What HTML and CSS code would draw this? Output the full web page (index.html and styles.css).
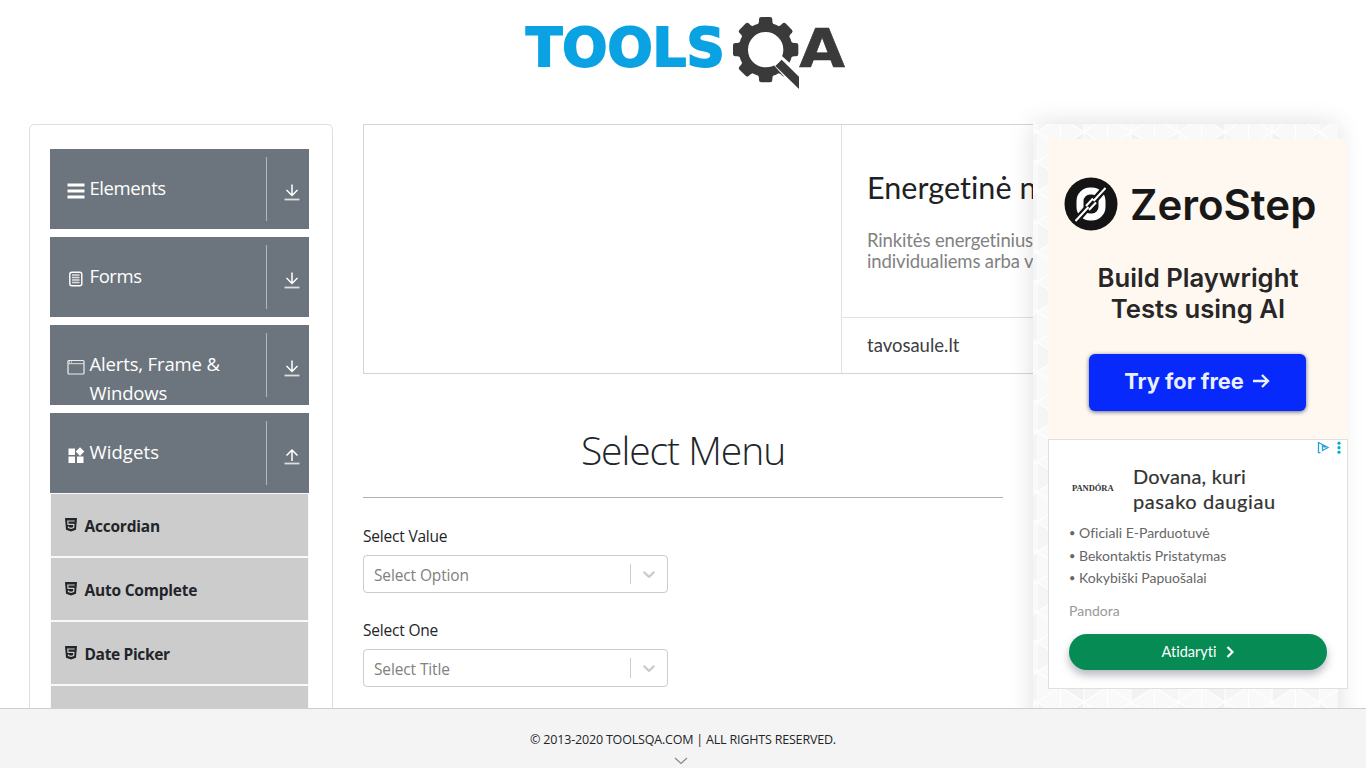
FILE: index.html
```html
<!DOCTYPE html>
<html lang="en">
<head>
<meta charset="utf-8">
<title>ToolsQA - Select Menu</title>
<link rel="stylesheet" href="styles.css">
</head>
<body>
<svg class="defs" width="0" height="0">
  <symbol id="down" viewBox="0 0 16 17"><path d="M8 .5v11M2.500 6 8 11.500l5.500-5.500" fill="none" stroke="#fff" stroke-width="1.500"/><path d="M.5 15.500h15" stroke="#ddd" stroke-width="1.800"/></symbol>
  <symbol id="up" viewBox="0 0 16 17"><path d="M8 13V2M2.500 7.500 8 2l5.500 5.500" fill="none" stroke="#fff" stroke-width="1.500"/><path d="M.5 15.500h15" stroke="#ddd" stroke-width="1.800"/></symbol>
  <symbol id="html5" viewBox="0 0 12 14"><path d="M0 0h12l-1 11.700L6 13.500l-5-1.800z" fill="#212529"/><path d="M9.700 3H2.800l.25 3.300H8.900l-.3 3.200L6 10.400l-2.500-.9-.1-1" fill="none" stroke="#ccc" stroke-width="1.200"/></symbol>
  <symbol id="chev" viewBox="0 0 20 20"><path d="M4.516 7.548c.436-.446 1.043-.481 1.576 0L10 11.295l3.908-3.747c.533-.481 1.141-.446 1.574 0 .436.445.408 1.197 0 1.615-.406.418-4.695 4.502-4.695 4.502a1.095 1.095 0 0 1-1.576 0S4.924 9.581 4.516 9.163s-.436-1.170 0-1.615z" fill="#ccc"/></symbol>
</svg>
<header class="header">
  <svg class="logo" viewBox="0 0 1020 285">
    <text class="logo-text" x="33" y="183" textLength="596" lengthAdjust="spacingAndGlyphs" fill="#0aa2e2" stroke="#0aa2e2" stroke-width="6">TOOLS</text>
    <g transform="translate(752 134)" fill="#3a3a3b">
      <g id="teeth">
        <path id="tooth" d="M-25-70-20-84V-91q0-7 7-7H13q7 0 7 7v7l5 14z"/>
        <use href="#tooth" transform="rotate(45)"/><use href="#tooth" transform="rotate(90)"/>
        <use href="#tooth" transform="rotate(135)"/><use href="#tooth" transform="rotate(180)"/>
        <use href="#tooth" transform="rotate(225)"/><use href="#tooth" transform="rotate(270)"/>
        <use href="#tooth" transform="rotate(315)"/>
      </g>
      <circle r="67" fill="none" stroke="#3a3a3b" stroke-width="28"/>
      <path d="M22 44 48 18l75 68v46h-22z" fill="#fff"/>
      <path d="M29 49 48 30l52 51v37z"/>
    </g>
    <text class="logo-text" x="853" y="185" textLength="137" lengthAdjust="spacingAndGlyphs" fill="#3a3a3b" stroke="#3a3a3b" stroke-width="2">A</text>
  </svg>
</header>
<main class="main">
  <nav class="sidebar">
    <div class="group"><svg class="gicon" viewBox="0 0 18 18"><path d="M.5 3h17M.5 9h17M.5 15h17" stroke="#fff" stroke-width="2.800"/></svg><span class="gname">Elements</span><span class="toggle"><svg><use href="#down"/></svg></span></div>
    <div class="group"><svg class="gicon" viewBox="0 0 18 18"><rect x="2.800" y="2.300" width="12" height="13.500" rx="2" fill="none" stroke="#fff" stroke-width="1.400"/><path d="M5 5h7.500M5 7.500h7.500M5 10h7.500M5 12.500h7.500" stroke="#ddd" stroke-width="1.300"/></svg><span class="gname">Forms</span><span class="toggle"><svg><use href="#down"/></svg></span></div>
    <div class="group"><svg class="gicon" viewBox="0 0 18 18"><rect x="1" y="2.500" width="16" height="13.500" rx="1" fill="none" stroke="#eee" stroke-width="1.200"/><path d="M1 5.700h16" stroke="#ddd"/><path d="M2 4h4" stroke="#fff" stroke-dasharray="1 1"/></svg><span class="gname wide">Alerts, Frame &amp; Windows</span><span class="toggle"><svg><use href="#down"/></svg></span></div>
    <div class="group open"><svg class="gicon" viewBox="0 0 18 18" fill="#fff"><path d="M1.500 2.500H8V9H1.500zM1.500 10.500H8V17H1.500zM10 10.500h6.500V17H10zM13 1.300l4.300 4.300-4.300 4.300-4.300-4.300z"/></svg><span class="gname wider">Widgets</span><span class="toggle"><svg><use href="#up"/></svg></span></div>
    <ul class="items">
      <li><svg><use href="#html5"/></svg><span>Accordian</span></li>
      <li><svg><use href="#html5"/></svg><span>Auto Complete</span></li>
      <li><svg><use href="#html5"/></svg><span class="tight">Date Picker</span></li>
      <li></li>
    </ul>
  </nav>
  <section class="content">
    <div class="banner">
      <div class="banner-image"></div>
      <div class="banner-copy">
        <div class="banner-body">
          <div class="banner-title">Energetinė n</div>
          <div class="banner-text">Rinkitės energetinius<br>individualiems arba v</div>
        </div>
        <div class="banner-site">tavosaule.lt</div>
      </div>
    </div>
    <h1>Select Menu</h1>
    <div class="label">Select Value</div>
    <div class="select"><span>Select Option</span><svg><use href="#chev"/></svg></div>
    <div class="label">Select One</div>
    <div class="select"><span>Select Title</span><svg><use href="#chev"/></svg></div>
  </section>
  <aside class="ads">
    <svg class="pattern">
      <defs><pattern id="tri" width="141" height="60" patternUnits="userSpaceOnUse" x="4" y="8">
        <rect width="141" height="60" fill="#f9f9f9"/>
        <path d="M47 0v30L23.500 15zM47 60V30L23.500 45zM94 0v30l23.500-15z" fill="#f2f2f2"/>
        <path d="M47 0 70.500 15 47 30zM0 30l23.500 15L0 60zM117.500 15 141 0v30z" fill="#f5f5f5"/>
        <path d="M0 0v60M23.500 0v60M47 0v60M70.500 0v60M94 0v60M117.500 0v60M0 0l94 60M94 0 0 60M47 0l94 60M141 0 47 60M0 30 47 0M0 30l47 30M94 0l47 30-47 30" fill="none" stroke="#fff" stroke-width="1.200"/>
      </pattern></defs>
      <rect width="100%" height="100%" fill="url(#tri)"/>
    </svg>
    <div class="zero">
      <div class="zero-brand">
        <svg viewBox="0 0 54 54"><circle cx="27" cy="27" r="26.500" fill="#141414"/><rect x="16" y="14" width="22" height="26" rx="10" fill="none" stroke="#fff" stroke-width="7"/><path d="M10 46 44 8" stroke="#141414" stroke-width="6.500"/><path d="M11.500 44 24.500 30M29.500 24 41.500 11M22 29l7-7.500M25 33l7-7.500" stroke="#fff" stroke-width="2"/></svg>
        <span>ZeroStep</span>
      </div>
      <div class="zero-line z1">Build Playwright</div>
      <div class="zero-line">Tests using AI</div>
      <div class="zero-button"><span>Try for free</span><svg viewBox="0 0 18 16"><path d="M1 8h15M10 2l6 6-6 6" fill="none" stroke="#e9efff" stroke-width="2.400"/></svg></div>
    </div>
    <div class="pandora">
      <svg class="adchoice" viewBox="0 0 26 14"><path d="M3.500 11.700H1.500V1.500L11 6.500 5.500 9.500V5l3 1.500" fill="none" stroke="#2a9fd8" stroke-width="1.300"/><g fill="#00aecd"><circle cx="22" cy="2.200" r="1.600"/><circle cx="22" cy="6.700" r="1.600"/><circle cx="22" cy="11.200" r="1.600"/></g></svg>
      <div class="pan-head"><span class="pan-logo">PANDÓRA</span><div class="pan-title"><span class="p1">Dovana, kuri</span><br><span class="p2">pasako daugiau</span></div></div>
      <ul class="pan-list"><li>Oficiali E-Parduotuvė</li><li>Bekontaktis Pristatymas</li><li>Kokybiški Papuošalai</li></ul>
      <div class="pan-name">Pandora</div>
      <div class="pan-button"><span>Atidaryti</span><svg viewBox="0 0 8 12"><path d="M1.500 1 6.500 6l-5 5" fill="none" stroke="#fff" stroke-width="2.200"/></svg></div>
    </div>
  </aside>
</main>
<footer class="footer"><span>© 2013-2020 TOOLSQA.COM | ALL RIGHTS RESERVED.</span><svg viewBox="0 0 14 8"><path d="M1 1l6 5.500L13 1" fill="none" stroke="#888" stroke-width="1.200"/></svg></footer>
</body>
</html>
```
FILE: styles.css
```css
* { box-sizing: border-box; }
body { margin: 0; height: 768px; overflow: hidden; display: flex; flex-direction: column; background: #fff; color: #212529; font-family: "Open Sans", "Noto Sans", sans-serif; font-variant-ligatures: none; }
ul { list-style: none; margin: 0; padding: 0; }
svg { display: block; flex: none; }
.defs { position: absolute; }
.header { height: 124px; flex: none; padding: 5px 0 0 515px; }
.logo { width: 340px; height: 95px; }
.logo-text { font: bold 162px "DejaVu Sans", sans-serif; }
.main { flex: 1; min-height: 0; display: flex; gap: 30px; padding-left: 29px; }

.sidebar { width: 304px; height: 700px; flex: none; border: 1px solid #dfdfdf; border-radius: 5px; padding: 24px 23px 0 20px; }
.group { height: 80px; margin-bottom: 8px; padding: 8px 9px 8px 17px; background: #6c757d; color: #fff; display: flex; overflow: hidden; }
.group.open { margin-bottom: 0; }
.gicon { width: 18px; height: 18px; margin: 25px 4.500px 0 0; }
.gname { flex: 1; font-size: 18.500px; line-height: 29px; padding-top: 16px; letter-spacing: -.42px; }
.gname.wide { letter-spacing: -.15px; }
.gname.wider { letter-spacing: .1px; }
.toggle { width: 43px; height: 64px; margin-right: -9px; border-left: 1px solid #b3b7bb; padding: 27px 0 0 17px; }
.toggle svg { width: 16px; height: 17px; }
.items li { height: 64px; border: 1px solid #f8f9fa; background: #ccc; display: flex; align-items: flex-start; padding: 24px 0 0 14px; font-size: 15.500px; font-weight: 700; line-height: 17px; }
.items svg { width: 12px; height: 14px; margin-right: 7.500px; }
.items span { letter-spacing: -.22px; }
.items .tight { letter-spacing: -.35px; }

.content { width: 640px; flex: none; }
.banner { width: 670px; height: 250px; border: 1px solid #d4d4d4; border-right: 0; display: flex; overflow: hidden; }
.banner-image { width: 478px; flex: none; border-right: 1px solid #e2e2e2; }
.banner-copy { flex: 1; font-family: Lato, sans-serif; white-space: nowrap; }
.banner-body { height: 193px; border-bottom: 1px solid #e2e2e2; padding: 42px 0 0 25px; }
.banner-title { font-size: 30.500px; line-height: 40px; color: #202124; letter-spacing: .05px; }
.banner-text { font-size: 18.500px; line-height: 21px; color: #828282; margin-top: 23px; letter-spacing: -.14px; }
.banner-site { padding: 16px 25px; font-size: 18.500px; line-height: 22px; color: #3c4043; }
h1 { margin: 47px 0 0; height: 77px; border-bottom: 1px solid #b0b0b0; text-align: center; font-size: 39px; line-height: 58px; font-weight: 300; letter-spacing: -1.050px; }
.label { font-size: 15.500px; line-height: 24px; height: 31px; margin-top: 26px; letter-spacing: -.2px; }
.select { width: 305px; height: 38px; border: 1px solid #ccc; border-radius: 4px; color: #808080; display: flex; align-items: center; padding-left: 10px; font-size: 15.500px; letter-spacing: -.13px; }
.select + .label { margin-top: 25px; }
.select span { flex: 1; padding-top: 2px; }
.select svg { width: 37px; height: 20px; padding: 0 8px; border-left: 1px solid #ccc; }

.ads { position: relative; width: 305px; height: 700px; flex: none; padding: 15px; box-shadow: 0 0 24px rgba(0,0,0,.13); background: #f8f8f8; }
.pattern { position: absolute; inset: 0; width: 305px; height: 700px; }
.zero { position: relative; width: 300px; height: 300px; background: #fef8f1; font-family: Inter, sans-serif; display: flex; flex-direction: column; align-items: center; padding-top: 38px; color: #282626; }
.zero-brand { display: flex; align-items: center; gap: 12px; height: 54px; align-self: flex-start; margin-left: 16px; font-size: 42px; font-weight: 600; color: #181818; }
.zero-brand svg { width: 54px; height: 54px; }
.zero-line { font-size: 25.700px; line-height: 31px; font-weight: 600; }
.z1 { margin-top: 31px; }
.zero-button { margin: 30px 2px 0 0; width: 217px; height: 57px; border-radius: 6px; background: #0829fb; box-shadow: 0 1px 4px rgba(0,0,50,.6); color: #e9efff; display: flex; align-items: center; justify-content: center; gap: 8px; font-size: 21.800px; font-weight: 700; padding-bottom: 3px; }
.zero-button svg { width: 18px; height: 16px; }
.pandora { position: relative; width: 300px; height: 250px; background: #fff; border: 1px solid #e0e0e0; padding: 24px 20px 0; font-family: Lato, sans-serif; }
.adchoice { position: absolute; right: 4px; top: 1px; width: 26px; height: 14px; }
.pan-head { display: flex; height: 58px; }
.pan-logo { width: 64px; padding: 17px 0 0 3px; font: bold 8.500px/14px "Liberation Serif", serif; color: #333; letter-spacing: -.05px; }
.pan-title { font-size: 20px; line-height: 25px; color: #333; white-space: nowrap; -webkit-text-stroke: .2px #333; }
.p1 { letter-spacing: .22px; }
.p2 { letter-spacing: .6px; }
.pan-list { font-size: 14px; line-height: 22.500px; color: #666; }
.pan-list li { height: 22.500px; display: flex; }
.pan-list li::before { content: "•"; font-size: 11px; width: 10px; }
.pan-name { font-size: 14px; line-height: 20px; color: #999; margin-top: 11px; }
.pan-button { margin-top: 13px; width: 258px; height: 36px; border-radius: 18px; background: #058b53; color: #fff; display: flex; align-items: center; justify-content: center; gap: 10px; font-size: 14.500px; box-shadow: 0 5px 9px rgba(50,50,75,.35); }
.pan-button svg { width: 8px; height: 12px; }

.footer { position: relative; height: 60px; flex: none; background: #f4f4f4; border-top: 1px solid #ccc; display: flex; flex-direction: column; align-items: center; padding-top: 21px; font-size: 12.500px; line-height: 20px; letter-spacing: -.19px; }
.footer svg { width: 14px; height: 8px; margin: 7px 4px 0 0; }
```
